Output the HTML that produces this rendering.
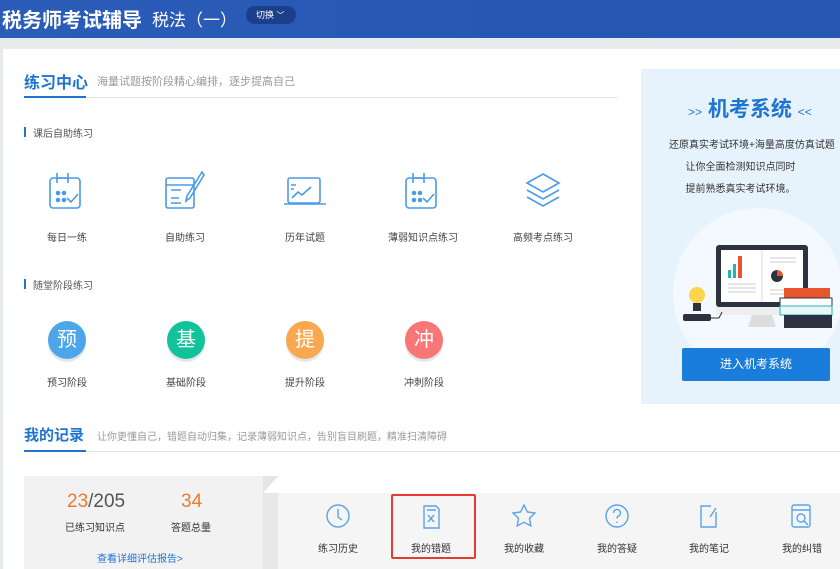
<!DOCTYPE html>
<html><head><meta charset="utf-8"><style>
*{margin:0;padding:0;box-sizing:border-box}
body{width:840px;height:569px;overflow:hidden;background:#fff;font-family:"Liberation Sans","Noto Sans CJK SC",sans-serif;position:relative;color:#333}
.a{position:absolute}
.hdr{left:0;top:0;width:840px;height:38px;background:linear-gradient(90deg,#2a5cb8,#2657b4 60%,#2556b2)}
.gap{left:0;top:38px;width:840px;height:11px;background:#e8ebee}
.lb{left:0;top:49px;width:3px;height:520px;background:#e8ebee}
.t{white-space:nowrap}
.c{text-align:center;white-space:nowrap}
.ic{position:absolute}
.circ{position:absolute;width:38px;height:38px;border-radius:50%;color:#fff;font-size:20px;text-align:center;line-height:38px;box-shadow:0 3px 0 #e3e6ea}
</style></head><body>
<div class="a hdr"></div>
<div class="a t" style="left:2px;top:4px;color:#fff;font-size:20px;font-weight:bold;">税务师考试辅导</div>
<div class="a t" style="left:152px;top:6px;color:#fff;font-size:17px;">税法（一）</div>
<div class="a" style="left:246px;top:6px;width:50px;height:18px;border-radius:9px;background:#1c3f8c;color:#fff;font-size:9px;line-height:18px;padding-left:10px;">切换 <span style="font-size:8px">﹀</span></div>
<div class="a gap"></div><div class="a lb"></div>

<div class="a t" style="left:24px;top:69px;color:#1f74d0;font-size:16px;font-weight:bold;">练习中心</div>
<div class="a t" style="left:97px;top:73px;color:#999;font-size:11px;">海量试题按阶段精心编排，逐步提高自己</div>
<div class="a" style="left:24px;top:97px;width:594px;height:1px;background:#e5e5e5"></div>
<div class="a" style="left:24px;top:96px;width:62px;height:2px;background:#1f74d0"></div>

<div class="a" style="left:24px;top:127px;width:2px;height:10px;background:#1f74d0"></div>
<div class="a t" style="left:33px;top:125px;color:#555;font-size:10px;">课后自助练习</div>

<svg class="ic" style="left:40px;top:168px" width="50" height="45" viewBox="0 0 50 45" fill="none" stroke="#4a9ae8" stroke-width="1.6"><rect x="10" y="10" width="30" height="30" rx="3"/><path d="M17 5v10M28 5v10M17 10h11"/><circle cx="18" cy="25" r="1.5" fill="#4a9ae8"/><circle cx="24" cy="25" r="1.5" fill="#4a9ae8"/><circle cx="18" cy="32" r="1.5" fill="#4a9ae8"/><circle cx="24" cy="32" r="1.5" fill="#4a9ae8"/><path d="M27 30l4 4 7-8"/></svg>
<svg class="ic" style="left:160px;top:168px" width="50" height="45" viewBox="0 0 50 45" fill="none" stroke="#4a9ae8" stroke-width="1.6"><rect x="6" y="10" width="28" height="30" rx="2"/><path d="M6 17h28M11 22h10M11 30h8M11 35h10M42 4L27 28l-1 5 4-3 14-23z"/></svg>
<svg class="ic" style="left:280px;top:168px" width="50" height="45" viewBox="0 0 50 45" fill="none" stroke="#4a9ae8" stroke-width="1.6"><rect x="8" y="10" width="32" height="25" rx="2"/><path d="M4 36h42M11 17h5M11 21h3M12 30l6-6 4 3 9-8"/></svg>
<svg class="ic" style="left:396px;top:168px" width="50" height="45" viewBox="0 0 50 45" fill="none" stroke="#4a9ae8" stroke-width="1.6"><rect x="10" y="10" width="30" height="30" rx="3"/><path d="M17 5v10M28 5v10M17 10h11"/><circle cx="18" cy="25" r="1.5" fill="#4a9ae8"/><circle cx="24" cy="25" r="1.5" fill="#4a9ae8"/><circle cx="18" cy="32" r="1.5" fill="#4a9ae8"/><circle cx="24" cy="32" r="1.5" fill="#4a9ae8"/><path d="M27 30l4 4 7-8"/></svg>
<svg class="ic" style="left:518px;top:168px" width="50" height="45" viewBox="0 0 50 45" fill="none" stroke="#4a9ae8" stroke-width="1.6"><path d="M25 6l16 9-16 9-16-9z"/><path d="M9 22l16 9 16-9M9 29l16 9 16-9"/></svg>

<div class="a c" style="left:27px;top:229px;width:80px;font-size:10px;color:#444">每日一练</div>
<div class="a c" style="left:145px;top:229px;width:80px;font-size:10px;color:#444">自助练习</div>
<div class="a c" style="left:265px;top:229px;width:80px;font-size:10px;color:#444">历年试题</div>
<div class="a c" style="left:373px;top:229px;width:100px;font-size:10px;color:#444">薄弱知识点练习</div>
<div class="a c" style="left:493px;top:229px;width:100px;font-size:10px;color:#444">高频考点练习</div>

<div class="a" style="left:24px;top:279px;width:2px;height:10px;background:#1f74d0"></div>
<div class="a t" style="left:33px;top:277px;color:#555;font-size:10px;">随堂阶段练习</div>

<div class="circ" style="left:48px;top:321px;background:#4ea6ea">预</div>
<div class="circ" style="left:167px;top:321px;background:#12c29a">基</div>
<div class="circ" style="left:286px;top:321px;background:#f8a84e">提</div>
<div class="circ" style="left:405px;top:321px;background:#f77777">冲</div>
<div class="a c" style="left:27px;top:374px;width:80px;font-size:10px;color:#444">预习阶段</div>
<div class="a c" style="left:146px;top:374px;width:80px;font-size:10px;color:#444">基础阶段</div>
<div class="a c" style="left:265px;top:374px;width:80px;font-size:10px;color:#444">提升阶段</div>
<div class="a c" style="left:384px;top:374px;width:80px;font-size:10px;color:#444">冲刺阶段</div>

<!-- right panel -->
<div class="a" style="left:641px;top:69px;width:199px;height:335px;background:#e7f3fc"></div>
<div class="a t" style="left:688px;top:93px;color:#1f74d0;font-size:21px;font-weight:bold"><span style="font-size:12px;font-weight:normal">&gt;&gt;</span> 机考系统 <span style="font-size:12px;font-weight:normal">&lt;&lt;</span></div>
<div class="a t" style="left:669px;top:136px;font-size:10px;color:#333">还原真实考试环境+海量高度仿真试题</div>
<div class="a c" style="left:641px;top:158px;width:199px;font-size:10px;color:#333">让你全面检测知识点同时</div>
<div class="a c" style="left:641px;top:180px;width:199px;font-size:10px;color:#333">提前熟悉真实考试环境。</div>
<div class="a" style="left:673px;top:208px;width:170px;height:170px;border-radius:50%;background:#f3f9fe"></div>
<svg class="a" style="left:680px;top:240px" width="160" height="95" viewBox="0 0 160 95">
<rect x="36" y="5" width="92" height="62" rx="3" fill="#2b3340"/><rect x="41" y="10" width="82" height="52" fill="#fff"/><path d="M82 10v52" stroke="#ddd"/>
<rect x="48" y="30" width="3" height="8" fill="#22b5b5"/><rect x="53" y="24" width="3" height="14" fill="#22b5b5"/><rect x="58" y="16" width="4" height="22" fill="#e8542c"/>
<path d="M48 44h28M48 48h28M48 52h28M90 18h26M90 22h26M90 50h26M90 54h26" stroke="#ccc"/>
<circle cx="97" cy="36" r="6" fill="#2b3340"/><path d="M97 36V30a6 6 0 0 1 6 6z" fill="#e8542c"/>
<rect x="36" y="67" width="92" height="8" fill="#eee"/><path d="M72 75h20l4 12H68z" fill="#ddd"/>
<circle cx="17" cy="55" r="8" fill="#fcd54c"/><rect x="13" y="63" width="8" height="8" fill="#2b3340"/><rect x="3" y="74" width="28" height="7" rx="2" fill="#2b3340"/><path d="M31 78h8l3-6" stroke="#2b3340" fill="none"/>
<rect x="104" y="48" width="46" height="10" fill="#e8542c"/><rect x="100" y="58" width="52" height="8" fill="#fff" stroke="#2b3340"/><rect x="100" y="66" width="52" height="9" fill="#e8f8f8" stroke="#22b5b5"/><rect x="104" y="75" width="48" height="13" fill="#2b3340"/>
</svg>
<div class="a c" style="left:682px;top:348px;width:148px;height:33px;background:#1a7ddc;border-radius:2px;color:#fff;font-size:12px;line-height:33px">进入机考系统</div>

<!-- records -->
<div class="a t" style="left:24px;top:424px;color:#1f74d0;font-size:15px;font-weight:bold;">我的记录</div>
<div class="a t" style="left:97px;top:428px;color:#999;font-size:10px;">让你更懂自己，错题自动归集，记录薄弱知识点，告别盲目刷题，精准扫清障碍</div>
<div class="a" style="left:24px;top:451px;width:816px;height:1px;background:#e5e5e5"></div>
<div class="a" style="left:24px;top:450px;width:62px;height:2px;background:#1f74d0"></div>

<div class="a" style="left:24px;top:476px;width:240px;height:93px;background:#f2f2f2"></div>
<div class="a" style="left:263px;top:476px;width:0;height:0;border-left:16px solid #e2e2e2;border-bottom:17px solid transparent"></div>
<div class="a" style="left:263px;top:476px;width:15px;height:93px;background:linear-gradient(#fff 0,#fff 17px,#e8e8e8 17px)"></div>
<div class="a" style="left:263px;top:476px;width:0;height:0;border-top:17px solid #e4e4e4;border-right:15px solid transparent"></div>
<div class="a t" style="left:67px;top:491px;font-size:19px;color:#555"><span style="color:#ef7a2c">23</span>/205</div>
<div class="a t" style="left:181px;top:491px;font-size:19px;color:#ef7a2c">34</div>
<div class="a t" style="left:65px;top:519px;font-size:10px;color:#333">已练习知识点</div>
<div class="a t" style="left:171px;top:519px;font-size:10px;color:#333">答题总量</div>
<div class="a t" style="left:97px;top:550px;font-size:10px;color:#1f74d0">查看详细评估报告&gt;</div>

<div class="a" style="left:278px;top:493px;width:562px;height:76px;background:#f5f5f5"></div>
<div class="a" style="left:391px;top:494px;width:85px;height:65px;border:2px solid #e43b33;border-radius:2px"></div>
<svg class="a" style="left:323px;top:502px" width="30" height="28" viewBox="0 0 30 28" fill="none" stroke="#5aa4e8" stroke-width="1.4"><circle cx="15" cy="14" r="11"/><path d="M15 7v8l4 3"/></svg>
<svg class="a" style="left:416px;top:502px" width="30" height="28" viewBox="0 0 30 28" fill="none" stroke="#5aa4e8" stroke-width="1.4"><path d="M8 4h12l3 3v19H8z"/><path d="M11 8h9M12 13l6 7M18 13l-6 7"/></svg>
<svg class="a" style="left:509px;top:502px" width="30" height="28" viewBox="0 0 30 28" fill="none" stroke="#5aa4e8" stroke-width="1.4"><path d="M15 3l3.4 7 7.6 1-5.5 5.3 1.3 7.6L15 20.3 8.2 23.9l1.3-7.6L4 11l7.6-1z"/></svg>
<svg class="a" style="left:602px;top:502px" width="30" height="28" viewBox="0 0 30 28" fill="none" stroke="#5aa4e8" stroke-width="1.4"><circle cx="15" cy="14" r="11"/><path d="M11.5 11a3.5 3.5 0 1 1 4.5 3.3c-1 .4-1 1.2-1 2.2M15 19.5v1.5"/></svg>
<svg class="a" style="left:694px;top:502px" width="30" height="28" viewBox="0 0 30 28" fill="none" stroke="#5aa4e8" stroke-width="1.4"><path d="M17 4H7v21h15V10"/><path d="M22 6l-6 9"/></svg>
<svg class="a" style="left:786px;top:502px" width="30" height="28" viewBox="0 0 30 28" fill="none" stroke="#5aa4e8" stroke-width="1.4"><rect x="6" y="3" width="18" height="22" rx="2"/><path d="M6 8h18"/><circle cx="15" cy="16" r="4"/><path d="M18 19l4 4"/></svg>
<div class="a c" style="left:298px;top:540px;width:80px;font-size:10px;color:#333">练习历史</div>
<div class="a c" style="left:391px;top:540px;width:80px;font-size:10px;color:#333">我的错题</div>
<div class="a c" style="left:484px;top:540px;width:80px;font-size:10px;color:#333">我的收藏</div>
<div class="a c" style="left:577px;top:540px;width:80px;font-size:10px;color:#333">我的答疑</div>
<div class="a c" style="left:669px;top:540px;width:80px;font-size:10px;color:#333">我的笔记</div>
<div class="a c" style="left:762px;top:540px;width:80px;font-size:10px;color:#333">我的纠错</div>
</body></html>
